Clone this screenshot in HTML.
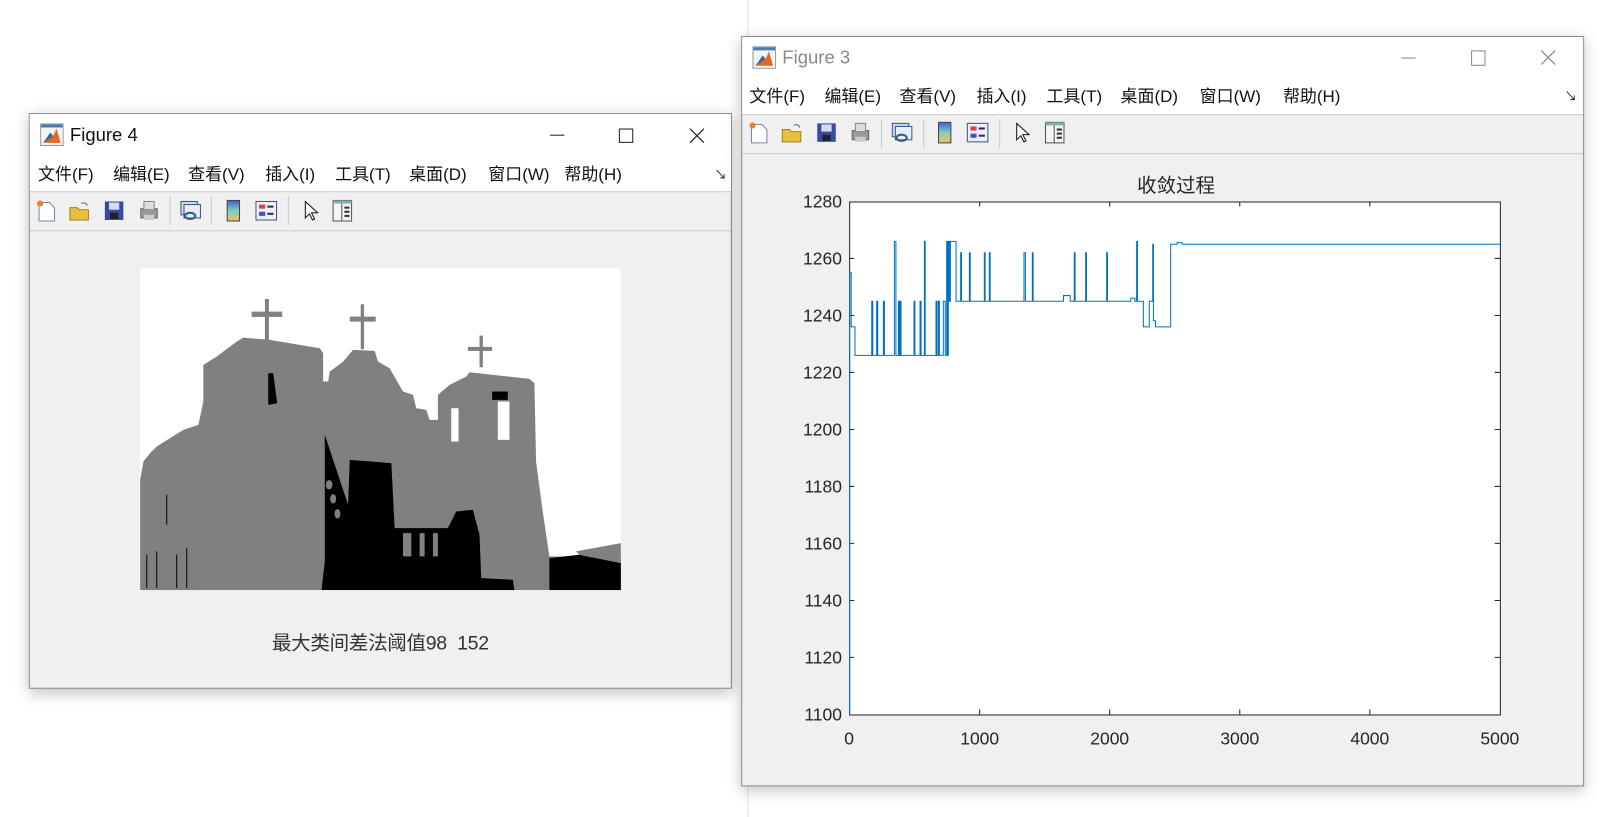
<!DOCTYPE html>
<html><head><meta charset="utf-8"><style>
html,body{margin:0;padding:0;width:1609px;height:817px;overflow:hidden;background:#fff}
#c{position:absolute;left:0;top:0;width:1565px;height:795px;transform:scale(1.028);transform-origin:0 0;font-family:"Liberation Sans","Noto Sans CJK SC",sans-serif}
.win{position:absolute;background:#f0f0f0;border:1px solid #8a8a8a;box-shadow:0 4px 14px rgba(0,0,0,.25)}
.tb{position:absolute;left:0;right:0;top:0;background:#fff}
.mb{position:absolute;left:0;right:0;background:#fff;border-bottom:1px solid #c8c8c8}
.mb span{position:absolute;font-size:16.5px;color:#111;top:5px;white-space:nowrap}
.tl{position:absolute;left:0;right:0;border-bottom:1px solid #c8c8c8}
.ico{position:absolute;width:22px;height:22px}
.sep{position:absolute;width:1px;height:28px;background:#c8c8c8}
</style></head><body><div id="c">
<div style="position:absolute;left:727px;top:0;width:1px;height:795px;background:#e0e0e0"></div>

<!-- Figure 4 -->
<div class="win" style="left:28px;top:110px;width:682px;height:558px">
 <div class="tb" style="height:40px">
  <svg style="position:absolute;left:10px;top:9px" width="23" height="22" viewBox="0 0 23 22"><rect x="0.5" y="0.5" width="22" height="21" fill="#f4f4f4" stroke="#8a9aaa"/><rect x="1" y="1" width="21" height="3" fill="#4a7ab0"/><path d="M3 19 L10 9 L13 12 L16 5 L20 19 Z" fill="#e06a20"/><path d="M3 19 L10 9 L12 13 Z" fill="#2a6ab0"/></svg>
  <div style="position:absolute;left:39px;top:10px;font-size:18px;color:#111">Figure 4</div>
  <div style="position:absolute;left:506px;top:20px;width:14px;height:1px;background:#222"></div>
  <div style="position:absolute;left:573px;top:14px;width:12px;height:12px;border:1px solid #222"></div>
  <svg style="position:absolute;left:642px;top:14px" width="14" height="14"><path d="M0 0L14 14M14 0L0 14" stroke="#222" stroke-width="1.2"/></svg>
 </div>
 <div class="mb" style="top:40px;height:35px">
  <span style="left:8px">文件(F)</span><span style="left:81px">编辑(E)</span><span style="left:154px">查看(V)</span><span style="left:229px">插入(I)</span><span style="left:297px">工具(T)</span><span style="left:369px">桌面(D)</span><span style="left:446px">窗口(W)</span><span style="left:520px">帮助(H)</span>
  <span style="left:666px;top:10px;font-size:12px">↘</span>
 </div>
 <div class="tl" style="top:76px;height:37px">
  <svg class="ico" style="left:5px;top:7px"><path d="M4 3h10l5 5v13H4z" fill="#fff" stroke="#6a8ab0"/><circle cx="5" cy="4" r="3" fill="#f08030"/></svg>
  <svg class="ico" style="left:37px;top:7px"><path d="M2 8h7l2 2h9v10H2z" fill="#e8c040" stroke="#a08020"/><path d="M13 4q4-2 6 2" stroke="#3a70b0" fill="none"/></svg>
  <svg class="ico" style="left:71px;top:7px"><rect x="2" y="2" width="18" height="18" fill="#3a4aa0"/><rect x="6" y="3" width="10" height="7" fill="#d8d8f0"/><rect x="7" y="13" width="8" height="6" fill="#222"/></svg>
  <svg class="ico" style="left:105px;top:7px"><rect x="3" y="9" width="16" height="9" fill="#999" stroke="#666"/><rect x="6" y="2" width="10" height="8" fill="#ddd" stroke="#888"/><rect x="6" y="15" width="10" height="5" fill="#ccc"/></svg>
  <div class="sep" style="left:136px;top:4px"></div>
  <svg class="ico" style="left:145px;top:7px"><rect x="2" y="2" width="16" height="13" fill="#d0d8e8" stroke="#3a5a80"/><rect x="5" y="5" width="16" height="13" fill="#e8eef8" stroke="#3a5a80"/><ellipse cx="11" cy="16" rx="5" ry="3" fill="none" stroke="#3a5a80" stroke-width="2"/></svg>
  <div class="sep" style="left:176px;top:4px"></div>
  <svg class="ico" style="left:187px;top:7px"><defs><linearGradient id="g1" x1="0" y1="0" x2="0" y2="1"><stop offset="0" stop-color="#4060d0"/><stop offset=".5" stop-color="#80d0c0"/><stop offset="1" stop-color="#f0c060"/></linearGradient></defs><rect x="5" y="1" width="12" height="20" fill="url(#g1)" stroke="#445"/></svg>
  <svg class="ico" style="left:219px;top:7px"><rect x="1" y="2" width="20" height="18" fill="#eef" stroke="#3a5a80"/><rect x="4" y="5" width="6" height="4" fill="#e04040"/><rect x="4" y="12" width="6" height="4" fill="#4050d0"/><rect x="12" y="6" width="6" height="2" fill="#333"/><rect x="12" y="13" width="6" height="2" fill="#333"/></svg>
  <div class="sep" style="left:251px;top:4px"></div>
  <svg class="ico" style="left:262px;top:7px"><path d="M6 2v16l4-4 3 6 2-1-3-6h6z" fill="#fff" stroke="#111"/></svg>
  <svg class="ico" style="left:293px;top:7px"><rect x="2" y="1" width="18" height="20" fill="#f4f4f4" stroke="#555"/><rect x="2" y="1" width="18" height="3" fill="#8aa"/><rect x="10" y="4" width="1" height="17" fill="#555"/><rect x="13" y="7" width="5" height="2" fill="#333"/><rect x="13" y="11" width="5" height="2" fill="#333"/><rect x="13" y="15" width="5" height="2" fill="#333"/></svg>
 </div>
 <svg style="position:absolute;left:107px;top:150px" width="468" height="313" viewBox="9 20 1446 966" preserveAspectRatio="none">
  <rect x="9" y="20" width="1446" height="966" fill="#fff"/>
  <path d="M10 986 L10 655 20 600 40 575 60 555 100 530 140 505 185 490 200 420 200 310 240 285 300 240 320 228 400 235 550 260 560 275 560 360 575 360 580 330 620 300 650 265 715 268 725 300 760 320 800 390 830 400 840 440 870 445 880 475 905 475 905 400 940 370 990 345 1000 332 1180 352 1195 365 1200 600 1220 750 1240 885 1455 890 1455 986 Z" fill="#808080"/>
  <rect x="385" y="112" width="12" height="125" fill="#808080"/><rect x="345" y="150" width="92" height="16" fill="#808080"/>
  <rect x="673" y="128" width="10" height="135" fill="#808080"/><rect x="640" y="165" width="78" height="15" fill="#808080"/>
  <rect x="1030" y="222" width="10" height="95" fill="#808080"/><rect x="995" y="256" width="73" height="12" fill="#808080"/>
  <path d="M565 520 L635 730 640 595 765 605 775 800 935 800 960 750 1010 745 1030 820 1035 950 1130 955 1135 986 555 986 565 900 Z" fill="#000"/>
  <ellipse cx="578" cy="670" rx="10" ry="14" fill="#808080"/><ellipse cx="590" cy="712" rx="9" ry="14" fill="#808080"/><ellipse cx="603" cy="757" rx="9" ry="14" fill="#808080"/>
  <rect x="800" y="815" width="25" height="70" fill="#808080"/><rect x="850" y="815" width="15" height="70" fill="#808080"/><rect x="890" y="815" width="15" height="70" fill="#808080"/>
  <path d="M395 335h15l12 90-27 5z" fill="#000"/>
  <rect x="945" y="440" width="22" height="100" fill="#fff"/><rect x="1085" y="420" width="35" height="115" fill="#fff"/><rect x="1068" y="390" width="47" height="25" fill="#000"/>
  <path d="M1240 890 L1330 880 1455 905 1455 986 1240 986Z" fill="#000"/>
  <path d="M1320 870 L1455 845 1455 905 1330 880Z" fill="#808080"/>
  <path d="M20 870h150v116H20z" fill="#808080"/><path d="M30 880v100M60 870v110M90 700v90M120 880v100M150 860v120" stroke="#000" stroke-width="3"/>
 </svg>
 <div style="position:absolute;left:0;right:0;top:500px;text-align:center;font-size:19px;color:#333;letter-spacing:-0.3px">最大类间差法阈值98&nbsp;&nbsp;152</div>
</div>

<!-- Figure 3 -->
<div class="win" style="left:721px;top:35px;width:818px;height:728px">
 <div class="tb" style="height:39px">
  <svg style="position:absolute;left:10px;top:9px" width="23" height="22" viewBox="0 0 23 22"><rect x="0.5" y="0.5" width="22" height="21" fill="#f4f4f4" stroke="#8a9aaa"/><rect x="1" y="1" width="21" height="3" fill="#4a7ab0"/><path d="M3 19 L10 9 L13 12 L16 5 L20 19 Z" fill="#e06a20"/><path d="M3 19 L10 9 L12 13 Z" fill="#2a6ab0"/></svg>
  <div style="position:absolute;left:39px;top:10px;font-size:18px;color:#888">Figure 3</div>
  <div style="position:absolute;left:641px;top:20px;width:14px;height:1px;background:#888"></div>
  <div style="position:absolute;left:709px;top:13px;width:12px;height:13px;border:1px solid #888"></div>
  <svg style="position:absolute;left:777px;top:13px" width="14" height="14"><path d="M0 0L14 14M14 0L0 14" stroke="#888" stroke-width="1.2"/></svg>
 </div>
 <div class="mb" style="top:39px;height:36px">
  <span style="left:7px">文件(F)</span><span style="left:80px">编辑(E)</span><span style="left:153px">查看(V)</span><span style="left:228px">插入(I)</span><span style="left:296px">工具(T)</span><span style="left:368px">桌面(D)</span><span style="left:445px">窗口(W)</span><span style="left:526px">帮助(H)</span>
  <span style="left:800px;top:10px;font-size:12px">↘</span>
 </div>
 <div class="tl" style="top:76px;height:37px">
  <svg class="ico" style="left:5px;top:6px"><path d="M4 3h10l5 5v13H4z" fill="#fff" stroke="#6a8ab0"/><circle cx="5" cy="4" r="3" fill="#f08030"/></svg>
  <svg class="ico" style="left:37px;top:6px"><path d="M2 8h7l2 2h9v10H2z" fill="#e8c040" stroke="#a08020"/><path d="M13 4q4-2 6 2" stroke="#3a70b0" fill="none"/></svg>
  <svg class="ico" style="left:71px;top:6px"><rect x="2" y="2" width="18" height="18" fill="#3a4aa0"/><rect x="6" y="3" width="10" height="7" fill="#d8d8f0"/><rect x="7" y="13" width="8" height="6" fill="#222"/></svg>
  <svg class="ico" style="left:104px;top:6px"><rect x="3" y="9" width="16" height="9" fill="#999" stroke="#666"/><rect x="6" y="2" width="10" height="8" fill="#ddd" stroke="#888"/><rect x="6" y="15" width="10" height="5" fill="#ccc"/></svg>
  <div class="sep" style="left:135px;top:4px"></div>
  <svg class="ico" style="left:144px;top:6px"><rect x="2" y="2" width="16" height="13" fill="#d0d8e8" stroke="#3a5a80"/><rect x="5" y="5" width="16" height="13" fill="#e8eef8" stroke="#3a5a80"/><ellipse cx="11" cy="16" rx="5" ry="3" fill="none" stroke="#3a5a80" stroke-width="2"/></svg>
  <div class="sep" style="left:176px;top:4px"></div>
  <svg class="ico" style="left:186px;top:6px"><rect x="5" y="1" width="12" height="20" fill="url(#g1)" stroke="#445"/></svg>
  <svg class="ico" style="left:218px;top:6px"><rect x="1" y="2" width="20" height="18" fill="#eef" stroke="#3a5a80"/><rect x="4" y="5" width="6" height="4" fill="#e04040"/><rect x="4" y="12" width="6" height="4" fill="#4050d0"/><rect x="12" y="6" width="6" height="2" fill="#333"/><rect x="12" y="13" width="6" height="2" fill="#333"/></svg>
  <div class="sep" style="left:250px;top:4px"></div>
  <svg class="ico" style="left:261px;top:6px"><path d="M6 2v16l4-4 3 6 2-1-3-6h6z" fill="#fff" stroke="#111"/></svg>
  <svg class="ico" style="left:293px;top:6px"><rect x="2" y="1" width="18" height="20" fill="#f4f4f4" stroke="#555"/><rect x="2" y="1" width="18" height="3" fill="#8aa"/><rect x="10" y="4" width="1" height="17" fill="#555"/><rect x="13" y="7" width="5" height="2" fill="#333"/><rect x="13" y="11" width="5" height="2" fill="#333"/><rect x="13" y="15" width="5" height="2" fill="#333"/></svg>
 </div>
</div>

<svg style="position:absolute;left:0;top:0" width="1565" height="795" font-family="Liberation Sans, Noto Sans CJK SC, sans-serif">
 <rect x="826.5" y="196.5" width="633" height="499" fill="#fff" stroke="#262626" stroke-width="1"/>
 <g stroke="#262626" stroke-width="1">
  <path d="M953 196v5M1079.5 196v5M1206 196v5M1332.5 196v5M953 695v-5M1079.5 695v-5M1206 695v-5M1332.5 695v-5"/>
  <path d="M826 251.4h5M826 306.9h5M826 362.3h5M826 417.8h5M826 473.2h5M826 528.6h5M826 584.1h5M826 639.5h5M1459 251.4h-5M1459 306.9h-5M1459 362.3h-5M1459 417.8h-5M1459 473.2h-5M1459 528.6h-5M1459 584.1h-5M1459 639.5h-5"/>
 </g>
 <g font-size="17" fill="#262626" text-anchor="end">
  <text x="819" y="202">1280</text><text x="819" y="257.4">1260</text><text x="819" y="312.9">1240</text><text x="819" y="368.3">1220</text><text x="819" y="423.8">1200</text><text x="819" y="479.2">1180</text><text x="819" y="534.6">1160</text><text x="819" y="590.1">1140</text><text x="819" y="645.5">1120</text><text x="819" y="701">1100</text>
 </g>
 <g font-size="17" fill="#262626" text-anchor="middle">
  <text x="826" y="724">0</text><text x="953" y="724">1000</text><text x="1079.5" y="724">2000</text><text x="1206" y="724">3000</text><text x="1332.5" y="724">4000</text><text x="1459" y="724">5000</text>
 </g>
 <text x="1144" y="187" font-size="19" fill="#262626" text-anchor="middle">收敛过程</text>
 <path fill="none" stroke="#0072BD" stroke-width="1" d="M826.5,695 V265 H828 V318 H831.7 V345.7 H848 V293 H849 V345.7 H852.8 V293 H853.8 V345.7 H859.3 V293 H860.3 V345.7 H870 V234.8 H871.5 V345.7 H873.9 V293 H874.9 V345.7 H875.5 V293 H876.5 V345.7 H889.1 V293 H890 V345.7 H895 V293 H896 V345.7 H899.2 V234.8 H900 V345.7 H910.5 V293 H911.5 V345.7 H912.8 V293 H913.8 V345.7 H917.6 V293 H919.5 V345.7 H920.9 V234.8 H921.8 V345.7 H922.5 V234.8 H923.5 V293 H924.5 V234.8 H930 V293 H934.5 V245.9 H935.3 V293 H943 V245.9 H943.8 V293 H957.5 V245.9 H958.3 V293 H962.4 V245.9 H963.2 V293 H996.1 V245.9 H997.5 V293 H1004.2 V245.9 H1005 V293 H1034.5 V287.5 H1041 V293 H1045 V245.9 H1045.8 V293 H1056.1 V245.9 H1056.9 V293 H1076.5 V245.9 H1077.3 V293 H1100 V290 H1104 V293 H1105.7 V234.8 H1106.5 V293 H1112.2 V318 H1118 V293 H1121.3 V237.6 H1122 V312 H1124 V318 H1138.8 V237.6 H1145 V236 H1150 V237.6 H1459"/>
</svg>
</div></body></html>
